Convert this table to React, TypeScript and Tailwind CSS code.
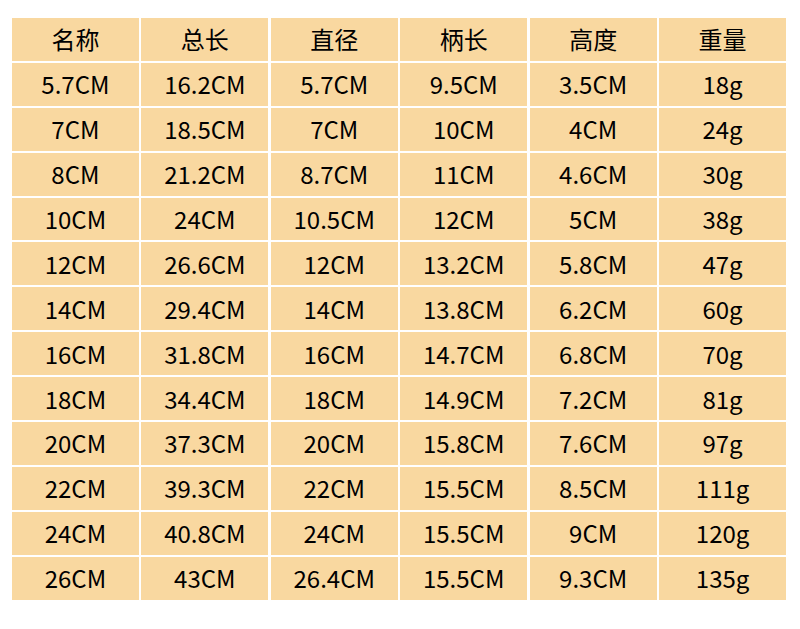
import React from "react";

const header = ["名称", "总长", "直径", "柄长", "高度", "重量"];
const rows = [
  ["5.7CM", "16.2CM", "5.7CM", "9.5CM", "3.5CM", "18g"],
  ["7CM", "18.5CM", "7CM", "10CM", "4CM", "24g"],
  ["8CM", "21.2CM", "8.7CM", "11CM", "4.6CM", "30g"],
  ["10CM", "24CM", "10.5CM", "12CM", "5CM", "38g"],
  ["12CM", "26.6CM", "12CM", "13.2CM", "5.8CM", "47g"],
  ["14CM", "29.4CM", "14CM", "13.8CM", "6.2CM", "60g"],
  ["16CM", "31.8CM", "16CM", "14.7CM", "6.8CM", "70g"],
  ["18CM", "34.4CM", "18CM", "14.9CM", "7.2CM", "81g"],
  ["20CM", "37.3CM", "20CM", "15.8CM", "7.6CM", "97g"],
  ["22CM", "39.3CM", "22CM", "15.5CM", "8.5CM", "111g"],
  ["24CM", "40.8CM", "24CM", "15.5CM", "9CM", "120g"],
  ["26CM", "43CM", "26.4CM", "15.5CM", "9.3CM", "135g"],
];

export default function App() {
  const all = [header, ...rows];
  return (
    <div
      className="w-[800px] h-[629px] bg-white pt-[18px] pl-[12px]"
      style={{ fontFamily: '"Noto Sans CJK SC", "Noto Sans", sans-serif' }}
    >
      <div className="grid w-[774px] grid-cols-6 gap-x-[2.6px] gap-y-[2px]">
        {all.map((r, i) =>
          r.map((c, j) => (
            <div
              key={`${i}-${j}`}
              className="h-[42.9px] bg-[#f9d8a0] flex items-center justify-center text-[24px] text-black leading-none"
            >
              {c}
            </div>
          ))
        )}
      </div>
    </div>
  );
}
